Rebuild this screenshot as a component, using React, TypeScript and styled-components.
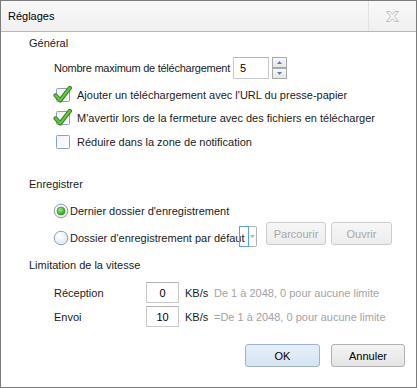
import React from "react";
import styled, { createGlobalStyle } from "styled-components";

const GlobalStyle = createGlobalStyle`
  html, body {
    margin: 0;
    padding: 0;
    background: #ffffff;
  }
  body {
    font-family: "Liberation Sans", Arial, sans-serif;
    font-size: 11px;
    color: #1b1b1b;
  }
`;

const Window = styled.div`
  box-sizing: border-box;
  width: 417px;
  height: 388px;
  border: 1px solid #7b7b7b;
  display: flex;
  flex-direction: column;
  background: #ffffff;
`;

const TitleBar = styled.div`
  height: 30px;
  border-bottom: 1px solid #b7b7b7;
  background: linear-gradient(#f9f9f9, #f0f0f0);
  display: flex;
  align-items: center;
`;

const Title = styled.div`
  flex: 1;
  padding-left: 7px;
  font-size: 11px;
  color: #000000;
`;

const CloseButton = styled.div`
  width: 47px;
  height: 30px;
  border-left: 1px solid #e3e3e3;
  display: flex;
  align-items: center;
  justify-content: center;
`;

const Body = styled.div`
  flex: 1;
  padding: 0 11px 0 28px;
  display: flex;
  flex-direction: column;
`;

const SectionTitle = styled.div<{ $top: number }>`
  margin-top: ${(p) => p.$top}px;
  height: 16px;
  line-height: 16px;
`;

const Row = styled.div<{ $top: number; $h: number; $indent?: number }>`
  margin-top: ${(p) => p.$top}px;
  height: ${(p) => p.$h}px;
  padding-left: ${(p) => p.$indent ?? 25}px;
  display: flex;
  align-items: center;
  white-space: nowrap;
`;

const Label = styled.span<{ $w?: number; $tight?: boolean }>`
  line-height: 16px;
  ${(p) => (p.$w ? `width: ${p.$w}px; flex: none;` : "")}
  ${(p) => (p.$tight ? "letter-spacing: -0.25px;" : "")}
`;

const TextBox = styled.div<{ $w: number; $h: number; $center?: boolean }>`
  box-sizing: border-box;
  width: ${(p) => p.$w}px;
  height: ${(p) => p.$h}px;
  margin-left: ${(p) => (p.$center ? 0 : 3)}px;
  border: 1px solid #c9c9c9;
  border-top-color: #b3b3b3;
  background: #ffffff;
  display: flex;
  align-items: center;
  justify-content: ${(p) => (p.$center ? "center" : "flex-start")};
  padding-left: ${(p) => (p.$center ? 0 : 6)}px;
  color: #000000;
`;

const Spinner = styled.div`
  margin-left: 3px;
  height: 22px;
  display: flex;
  flex-direction: column;
  justify-content: space-between;
`;

const SpinButton = styled.div`
  box-sizing: border-box;
  width: 15px;
  height: 11px;
  border: 1px solid #a9a9a9;
  background: linear-gradient(#f8f8f8, #e6e6e6);
  display: flex;
  align-items: center;
  justify-content: center;
`;

const CheckLabel = styled.span`
  margin-left: 4px;
  line-height: 16px;
`;

const RadioOption = styled.div<{ $w?: number; $top?: number }>`
  display: flex;
  align-items: center;
  height: 16px;
  margin-top: ${(p) => p.$top ?? 0}px;
  ${(p) => (p.$w ? `width: ${p.$w}px; flex: none;` : "")}
`;

const RadioLabel = styled.span`
  margin-left: 1px;
  line-height: 16px;
`;

const PathRow = styled.div<{ $top: number }>`
  margin-top: ${(p) => p.$top}px;
  height: 25px;
  padding-left: 24px;
  display: flex;
  align-items: flex-start;
  white-space: nowrap;
`;

const Combo = styled.div`
  box-sizing: border-box;
  margin-top: 4px;
  width: 18px;
  height: 21px;
  border: 1px solid #b4b4b4;
  border-left: none;
  border-radius: 0 2px 2px 0;
  display: flex;
`;

const ComboEdit = styled.div`
  box-sizing: border-box;
  width: 10px;
  height: 21px;
  margin-top: -1px;
  border: 1px solid #5aa2e6;
`;

const ComboArrow = styled.div`
  flex: 1;
  display: flex;
  align-items: center;
  justify-content: center;
`;

const Button = styled.div<{ $w: number; $variant: "primary" | "default" | "disabled"; $left?: number }>`
  box-sizing: border-box;
  width: ${(p) => p.$w}px;
  height: 23px;
  margin-left: ${(p) => p.$left ?? 0}px;
  border-radius: 3px;
  display: flex;
  align-items: center;
  justify-content: center;
  border: 1px solid
    ${(p) => (p.$variant === "primary" ? "#9fb4c8" : p.$variant === "disabled" ? "#c8cdd2" : "#b1b1b1")};
  background: ${(p) =>
    p.$variant === "primary"
      ? "linear-gradient(#e6eff8, #d6e4f1)"
      : p.$variant === "disabled"
      ? "linear-gradient(#f6f6f6, #ededed)"
      : "linear-gradient(#f4f4f4, #e4e4e4)"};
  color: ${(p) => (p.$variant === "disabled" ? "#a8a8a8" : "#000000")};
`;

const Unit = styled.span`
  width: 29px;
  margin-left: 6px;
  flex: none;
`;

const Hint = styled.span`
  color: #a3a3a3;
`;

const Footer = styled.div<{ $top: number }>`
  margin-top: ${(p) => p.$top}px;
  display: flex;
  justify-content: flex-end;
  gap: 11px;
`;

const CloseIcon = () => (
  <svg width="13" height="11" viewBox="0 0 13 11">
    <path
      d="M0.5 0.5 H4 L6.5 3.3 L9 0.5 H12.5 L8.5 5.5 L12.5 10.5 H9 L6.5 7.7 L4 10.5 H0.5 L4.5 5.5 Z"
      fill="#f5f5f5"
      stroke="#bdbdbd"
    />
  </svg>
);

const Arrow = ({ up, color, w = 7, h = 4 }: { up?: boolean; color: string; w?: number; h?: number }) => (
  <svg width={w} height={h} viewBox={`0 0 ${w} ${h}`}>
    <path d={up ? `M0 ${h} L${w / 2} 0 L${w} ${h} Z` : `M0 0 L${w / 2} ${h} L${w} 0 Z`} fill={color} />
  </svg>
);

const CheckBox = ({ checked }: { checked?: boolean }) => (
  <svg width="20" height="20" viewBox="0 0 20 20" style={{ flex: "none" }}>
    <defs>
      <linearGradient id="boxfill" x1="0" y1="0" x2="1" y2="1">
        <stop offset="0" stopColor="#eef2f7" />
        <stop offset="1" stopColor="#ffffff" />
      </linearGradient>
    </defs>
    <rect x="3.5" y="3.5" width="13" height="13" rx="1" fill="url(#boxfill)" stroke="#8fa2ba" />
    {checked && (
      <>
        <path d="M2.6 10.4 L7.2 15.4 L16.8 3" fill="none" stroke="#2f7d18" strokeWidth="4.2" strokeLinejoin="round" strokeLinecap="round" />
        <path d="M2.6 10.4 L7.2 15.4 L16.8 3" fill="none" stroke="#63c83d" strokeWidth="2.3" strokeLinejoin="round" strokeLinecap="round" />
      </>
    )}
  </svg>
);

const Radio = ({ checked }: { checked?: boolean }) => (
  <svg width="16" height="16" viewBox="0 0 16 16" style={{ flex: "none" }}>
    <defs>
      <radialGradient id="radiofill" cx="0.4" cy="0.35" r="0.7">
        <stop offset="0" stopColor="#ffffff" />
        <stop offset="1" stopColor="#dfe6ef" />
      </radialGradient>
      <radialGradient id="dotfill" cx="0.4" cy="0.35" r="0.7">
        <stop offset="0" stopColor="#9cf07a" />
        <stop offset="1" stopColor="#23930f" />
      </radialGradient>
    </defs>
    <circle cx="8" cy="8" r="6.8" fill="url(#radiofill)" stroke="#8c9db4" />
    {checked && <circle cx="8" cy="8" r="4" fill="url(#dotfill)" stroke="#3a8a22" strokeWidth="0.6" />}
  </svg>
);

export default function App() {
  return (
    <>
      <GlobalStyle />
      <Window>
        <TitleBar>
          <Title>Réglages</Title>
          <CloseButton>
            <CloseIcon />
          </CloseButton>
        </TitleBar>
        <Body>
          <SectionTitle $top={3}>Général</SectionTitle>
          <Row $top={6} $h={22}>
            <Label $w={176} $tight>Nombre maximum de téléchargement</Label>
            <TextBox $w={36} $h={22}>5</TextBox>
            <Spinner>
              <SpinButton>
                <Arrow up color="#5d7cb8" w={5} h={3} />
              </SpinButton>
              <SpinButton>
                <Arrow color="#5d7cb8" w={5} h={3} />
              </SpinButton>
            </Spinner>
          </Row>
          <Row $top={6} $h={20} $indent={24}>
            <CheckBox checked />
            <CheckLabel>Ajouter un téléchargement avec l'URL du presse-papier</CheckLabel>
          </Row>
          <Row $top={3} $h={20} $indent={24}>
            <CheckBox checked />
            <CheckLabel>M'avertir lors de la fermeture avec des fichiers en télécharger</CheckLabel>
          </Row>
          <Row $top={4} $h={20} $indent={24}>
            <CheckBox />
            <CheckLabel>Réduire dans la zone de notification</CheckLabel>
          </Row>

          <SectionTitle $top={24}>Enregistrer</SectionTitle>
          <Row $top={11} $h={16} $indent={24}>
            <RadioOption>
              <Radio checked />
              <RadioLabel>Dernier dossier d'enregistrement</RadioLabel>
            </RadioOption>
          </Row>
          <PathRow $top={3}>
            <RadioOption $w={186} $top={8}>
              <Radio />
              <RadioLabel>Dossier d'enregistrement par défaut</RadioLabel>
            </RadioOption>
            <Combo>
              <ComboEdit />
              <ComboArrow>
                <Arrow color="#b0b0b0" w={5} h={3} />
              </ComboArrow>
            </Combo>
            <Button $w={60} $variant="disabled" $left={9}>Parcourir</Button>
            <Button $w={61} $variant="disabled" $left={5}>Ouvrir</Button>
          </PathRow>

          <SectionTitle $top={10}>Limitation de la vitesse</SectionTitle>
          <Row $top={9} $h={21}>
            <Label $w={92}>Réception</Label>
            <TextBox $w={33} $h={21} $center>0</TextBox>
            <Unit>KB/s</Unit>
            <Hint>De 1 à 2048, 0 pour aucune limite</Hint>
          </Row>
          <Row $top={3} $h={21}>
            <Label $w={92}>Envoi</Label>
            <TextBox $w={33} $h={21} $center>10</TextBox>
            <Unit>KB/s</Unit>
            <Hint>=De 1 à 2048, 0 pour aucune limite</Hint>
          </Row>

          <Footer $top={17}>
            <Button $w={75} $variant="primary">OK</Button>
            <Button $w={74} $variant="default">Annuler</Button>
          </Footer>
        </Body>
      </Window>
    </>
  );
}
